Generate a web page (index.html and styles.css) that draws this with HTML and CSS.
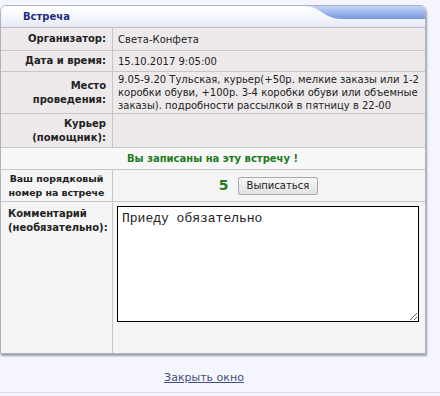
FILE: index.html
```html
<!DOCTYPE html>
<html lang="ru">
<head>
<meta charset="utf-8">
<title>Встреча</title>
<link rel="stylesheet" href="styles.css">
</head>
<body>
<div class="page">
  <div class="panel">
    <div class="panel-head">
      <svg class="head-deco" width="120" height="16" viewBox="0 0 120 16" aria-hidden="true">
        <defs>
          <linearGradient id="hg" x1="0" y1="0" x2="0" y2="1">
            <stop offset="0" stop-color="#c4d5f6"/>
            <stop offset="1" stop-color="#7a98de"/>
          </linearGradient>
        </defs>
        <path d="M0 0 C 14 0, 20 13, 36 13 L 120 13 L 120 0 Z" fill="url(#hg)"/>
      </svg>
      <span class="head-title">Встреча</span>
    </div>
    <table class="form">
      <tr class="r1"><th>Организатор:</th><td>Света-Конфета</td></tr>
      <tr class="r2"><th>Дата и время:</th><td>15.10.2017 9:05:00</td></tr>
      <tr class="r3"><th>Место<br>проведения:</th><td>9.05-9.20 Тульская, курьер(+50р. мелкие заказы или 1-2 коробки обуви, +100р. 3-4 коробки обуви или объемные заказы). подробности рассылкой в пятницу в 22-00</td></tr>
      <tr class="r4"><th>Курьер<br>(помощник):</th><td></td></tr>
      <tr class="r5"><td colspan="2" class="notice">Вы записаны на эту встречу !</td></tr>
      <tr class="r6"><th class="center">Ваш порядковый<br>номер на встрече</th><td class="num-cell"><span class="num">5</span><button type="button" class="btn">Выписаться</button></td></tr>
      <tr class="r7"><th class="left">Комментарий<br>(необязательно):</th><td class="comment-cell"><textarea class="comment">Приеду обязательно</textarea></td></tr>
    </table>
  </div>
  <div class="footer"><a href="#" class="close-link">Закрыть окно</a></div>
</div>
</body>
</html>
```

FILE: styles.css
```css
html, body {
  margin: 0;
  padding: 0;
  background: #f5f6fd;
}
body {
  font-family: "DejaVu Sans", Verdana, sans-serif;
  font-size: 10px;
  color: #222;
}
.page {
  width: 440px;
  height: 393px;
  padding-top: 5px;
  box-sizing: border-box;
  border-bottom: 1px solid #d8d9e2;
}
.panel {
  width: 426px;
  box-sizing: border-box;
  border: 1px solid #a9b3c2;
  border-radius: 6px 6px 0 0;
  background: #f5f5f5;
  box-shadow: 1px 2px 2px rgba(0,0,0,0.35);
  overflow: hidden;
}
.panel-head {
  position: relative;
  height: 21px;
  background: linear-gradient(#ffffff 0%, #f7f8fc 45%, #e6e9f6 100%);
  display: flex;
  align-items: center;
  padding-left: 22px;
}
.head-deco {
  position: absolute;
  right: 0;
  top: 0;
}
.head-title {
  font-weight: bold;
  color: #1d2b7e;
  font-size: 10px;
}
.form {
  width: 100%;
  border-collapse: collapse;
  table-layout: fixed;
}
.form th, .form td {
  border: 1px solid #c6c6c8;
  padding: 1px 6px;
  line-height: 13px;
}
.form tr:first-child th, .form tr:first-child td { border-top-color: #b9bdc8; }
.form th:first-child, .form td:first-child { border-left: none; }
.form th:last-child, .form td:last-child { border-right: none; }
.form tr:last-child th, .form tr:last-child td { border-bottom: none; }
.form th {
  width: 99px;
  text-align: right;
  font-weight: bold;
  color: #222;
  background: #eeeaec;
  line-height: 14px;
  vertical-align: middle;
  white-space: nowrap;
}
.form td {
  background: #eeeaec;
  padding-left: 5px;
  vertical-align: middle;
}
.r1 { height: 23px; }
.r2 { height: 21px; }
.r3 { height: 42px; }
.r4 { height: 34px; }
.r5 { height: 22px; }
.r6 { height: 32px; }
.r7 { height: 151px; }
.form .notice {
  text-align: center;
  font-weight: bold;
  color: #217a1c;
  background: #f8f8f8;
}
.r6 th, .r6 td, .r7 th, .r7 td { background: #f5f5f5; }
.form th.center {
  text-align: center;
  padding-left: 0;
  padding-right: 0;
  font-size: 9.4px;
}
.form th.left {
  text-align: left;
  vertical-align: top;
  padding-top: 5px;
  padding-left: 7px;
}
.num-cell { text-align: center; }
.num {
  font-weight: bold;
  font-size: 14px;
  color: #217a1c;
  margin-right: 9px;
  vertical-align: middle;
}
.btn {
  font-family: "DejaVu Sans", Verdana, sans-serif;
  font-size: 10px;
  color: #222;
  height: 18px;
  padding: 0 8px;
  border: 1px solid #a9a9a9;
  border-radius: 2px;
  background: linear-gradient(#f6f6f6, #e2e2e2);
  vertical-align: middle;
}
.form td.comment-cell {
  vertical-align: top;
  padding: 4px 0 0 4px;
}
.comment {
  display: block;
  width: 302px;
  height: 116px;
  box-sizing: border-box;
  border: 1px solid #000;
  background: #fff;
  padding: 4px;
  margin: 0;
  font-family: "Liberation Mono", "Courier New", monospace;
  font-size: 13px;
  color: #222;
}
.footer {
  text-align: center;
  width: 408px;
  padding-top: 17px;
}
.close-link {
  color: #434e7e;
  font-size: 11px;
  text-decoration: underline;
}
```
